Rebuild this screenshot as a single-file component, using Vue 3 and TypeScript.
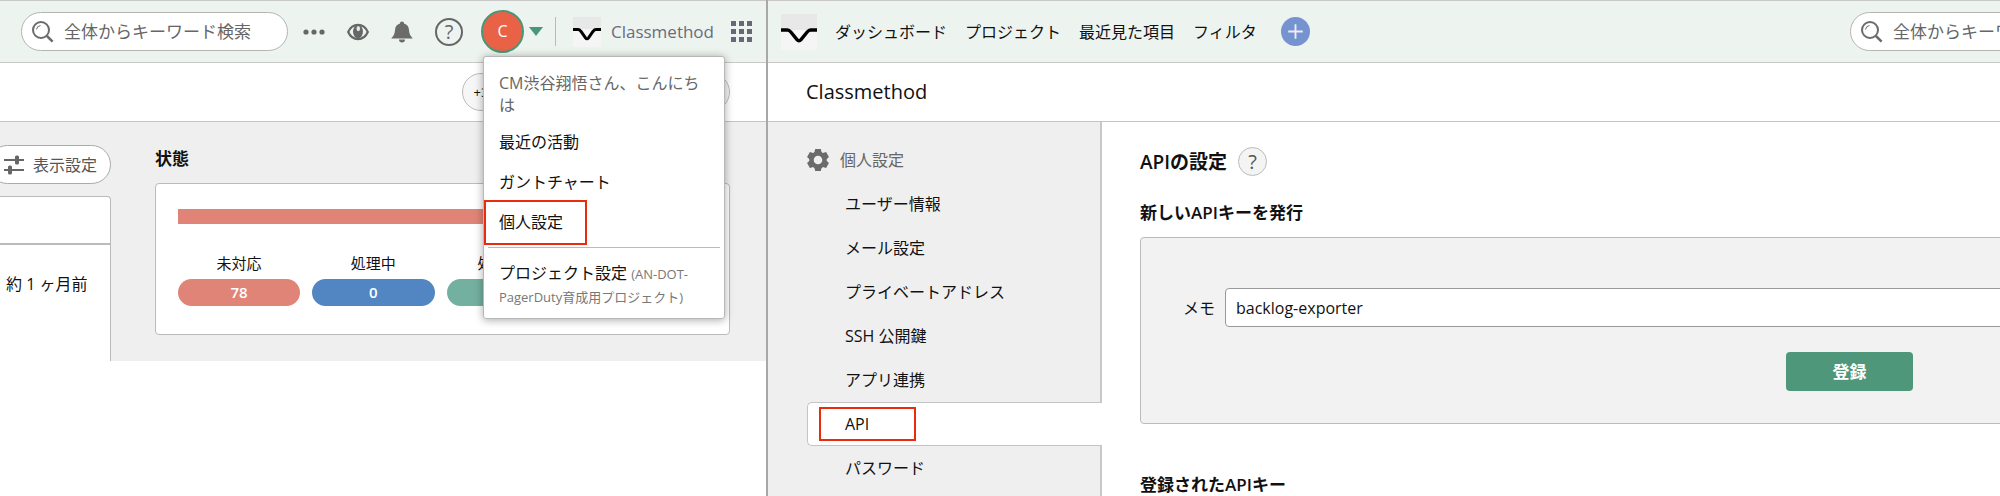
<script setup lang="ts">
import { ref } from 'vue'

interface Status {
  label?: string
  count?: number
  tone: string
}

const statuses: Status[] = [
  { label: '未対応', count: 78, tone: 'open' },
  { label: '処理中', count: 0, tone: 'progress' },
  { label: '処理済み', tone: 'resolved' },
]

const menuItems = [
  { label: '最近の活動', marked: false },
  { label: 'ガントチャート', marked: false },
  { label: '個人設定', marked: true },
]

const globalNav = ['ダッシュボード', 'プロジェクト', '最近見た項目', 'フィルタ']

const settingsNav = [
  'ユーザー情報',
  'メール設定',
  'プライベートアドレス',
  'SSH 公開鍵',
  'アプリ連携',
  'API',
  'パスワード',
]
const current = 'API'

const dots = [0, 1, 2]
const teeth = [0, 60, 120, 180, 240, 300]
const memo = ref('backlog-exporter')
</script>

<template>
  <div class="page">
    <section class="pane pane-left">
      <header class="topbar topbar-left">
        <div class="search">
          <svg class="lens" viewBox="0 0 22 22" aria-hidden="true">
            <circle cx="9" cy="9" r="8" fill="none" stroke="#6b6b6b" stroke-width="2" />
            <path d="M4.5 8.5A4.6 4.6 0 0 1 8.5 4.5" fill="none" stroke="#6b6b6b" stroke-width="1" />
            <path d="M14.8 14.8L20.6 20.6" stroke="#6b6b6b" stroke-width="2.6" />
          </svg>
          <input type="search" aria-label="キーワード検索" placeholder="全体からキーワード検索" />
        </div>
        <div class="tools">
          <button type="button" aria-label="その他">
            <svg width="22" height="22" viewBox="0 0 22 22">
              <circle v-for="d in dots" :key="d" :cx="3 + d * 8" cy="11" r="2.6" fill="#666" />
            </svg>
          </button>
          <button type="button" aria-label="ウォッチ">
            <svg width="22" height="22" viewBox="0 0 22 22">
              <path d="M1.2 11C3.4 6 7 3.9 11 3.9S18.6 6 20.8 11C18.6 16 15 18.1 11 18.1S3.4 16 1.2 11Z" fill="#edf3f0" stroke="#666" stroke-width="2.2" />
              <ellipse cx="11" cy="10.6" rx="5" ry="6.6" fill="#666" />
              <ellipse cx="11.3" cy="7.6" rx="1.8" ry="2.6" fill="#e4e9e7" />
            </svg>
          </button>
          <button type="button" aria-label="お知らせ">
            <svg width="22" height="22" viewBox="0 0 22 22">
              <path d="M11 0.5C12.3 0.5 13 1.3 13 2.5C16.2 3.3 17.8 5.8 18 9C18.2 12.8 19.3 14.8 21.8 17.5H0.2C2.700 14.8 3.8 12.8 4 9C4.2 5.8 5.8 3.3 9 2.5C9 1.3 9.7 0.5 11 0.5Z" fill="#6b6b6b" />
              <path d="M8 18.5H14A3 3 0 0 1 8 18.5Z" fill="#6b6b6b" />
            </svg>
          </button>
          <button type="button" class="help" aria-label="ヘルプ">?</button>
        </div>
        <div class="account">
          <button type="button" class="account-toggle" aria-expanded="true" aria-label="アカウント">
            <span class="avatar">C</span>
            <svg width="14" height="9" viewBox="0 0 14 9"><path d="M0 0H14L7 9Z" fill="#489779" /></svg>
          </button>
          <div class="menu">
            <p class="greeting">CM渋谷翔悟さん、こんにちは</p>
            <ul>
              <li v-for="item in menuItems" :key="item.label">
                <a href="#">{{ item.label }}</a>
                <span v-if="item.marked" class="mark menu-mark"></span>
              </li>
            </ul>
            <a href="#" class="project">プロジェクト設定 <small>(AN-DOT-PagerDuty育成用プロジェクト)</small></a>
          </div>
        </div>
        <a href="#" class="space">
          <svg width="28" height="30" viewBox="0 0 28 30" aria-hidden="true">
            <rect width="28" height="12" fill="#e8e8e8" />
            <rect y="12" width="28" height="18" fill="#f5f5f5" />
            <path d="M0 12.5H5C6.5 12.5 7 13.2 8 14.5L12.5 20.8Q14 22.8 15.5 20.8L20 14.5C21 13.2 21.5 12.5 23 12.5H28" fill="none" stroke="#000" stroke-width="3" />
          </svg>
          <span>Classmethod</span>
        </a>
        <button type="button" class="apps" aria-label="アプリ一覧">
          <i v-for="n in 9" :key="n"></i>
        </button>
      </header>

      <div class="subbar members">
        <span class="chip">+3</span>
        <span class="chip chip-end"></span>
      </div>

      <div class="board">
        <div class="activity">
          <button type="button" class="display">
            <svg width="20" height="20" viewBox="0 0 20 20" aria-hidden="true">
              <path d="M0 5H20M0 15H20" stroke="#666" stroke-width="2" />
              <rect x="11" y="0.5" width="4" height="9" rx="1.5" fill="#666" />
              <rect x="4" y="10.5" width="4" height="9" rx="1.5" fill="#666" />
            </svg>
            表示設定
          </button>
          <div class="feed">
            <div class="feed-head"></div>
            <p>約 1 ヶ月前</p>
          </div>
        </div>
        <div class="state">
          <h2>状態</h2>
          <div class="card">
            <div class="bar"></div>
            <dl>
              <div v-for="s in statuses" :key="s.tone">
                <dt>{{ s.label }}</dt>
                <dd :class="s.tone">{{ s.count }}</dd>
              </div>
            </dl>
          </div>
        </div>
      </div>
    </section>

    <section class="pane pane-right">
      <header class="topbar topbar-right">
        <a href="#" class="logo" aria-label="ホーム">
          <svg width="36" height="36" viewBox="0 0 36 36">
            <rect width="36" height="16" fill="#e8e8e8" />
            <rect y="16" width="36" height="20" fill="#f5f5f5" />
            <path d="M0 16H6.5C8 16 8.800 16.8 9.800 18L16 25.6Q18 28 20 25.6L26.2 18C27.2 16.8 28 16 29.5 16H36" fill="none" stroke="#000" stroke-width="3.400" />
          </svg>
        </a>
        <nav>
          <a v-for="n in globalNav" :key="n" href="#">{{ n }}</a>
        </nav>
        <button type="button" class="add" aria-label="追加">
          <svg width="29" height="29" viewBox="0 0 28 28">
            <circle cx="14" cy="14" r="14" fill="#7693d1" />
            <path d="M14 7V21M7 14H21" stroke="#e9eefa" stroke-width="1.800" />
          </svg>
        </button>
        <div class="search search-right">
          <svg class="lens" viewBox="0 0 22 22" aria-hidden="true">
            <circle cx="9" cy="9" r="8" fill="none" stroke="#6b6b6b" stroke-width="2" />
            <path d="M4.5 8.5A4.6 4.6 0 0 1 8.5 4.5" fill="none" stroke="#6b6b6b" stroke-width="1" />
            <path d="M14.8 14.8L20.6 20.6" stroke="#6b6b6b" stroke-width="2.6" />
          </svg>
          <input type="search" aria-label="キーワード検索" placeholder="全体からキーワード検索" />
        </div>
      </header>

      <div class="subbar org"><h1>Classmethod</h1></div>

      <div class="settings">
        <aside>
          <h2>
            <svg width="22" height="22" viewBox="0 0 22 22" aria-hidden="true">
              <g fill="#6b6b6b">
                <path v-for="t in teeth" :key="t" d="M8.2 0H13.8L15 5H7Z" :transform="`rotate(${t} 11 11)`" />
              </g>
              <circle cx="11" cy="11" r="6.5" fill="none" stroke="#6b6b6b" stroke-width="4.4" />
            </svg>
            個人設定
          </h2>
          <ul>
            <li v-for="s in settingsNav" :key="s" :class="{ active: s === current }">
              <a href="#">{{ s }}</a>
              <span v-if="s === current" class="mark nav-mark"></span>
            </li>
          </ul>
        </aside>
        <main>
          <div class="heading">
            <h2>APIの設定</h2>
            <button type="button" class="hint" aria-label="APIの設定について">?</button>
          </div>
          <h3>新しいAPIキーを発行</h3>
          <form @submit.prevent>
            <div class="field">
              <label for="memo">メモ</label>
              <input id="memo" v-model="memo" type="text" />
            </div>
            <button type="submit">登録</button>
          </form>
          <h3>登録されたAPIキー</h3>
        </main>
      </div>
    </section>
  </div>
</template>

<style>
body {
  margin: 0;
  background: #fff;
}
</style>

<style scoped>
* {
  box-sizing: border-box;
}
h1, h2, h3, p, ul, dl, dd {
  margin: 0;
  padding: 0;
}
ul {
  list-style: none;
}
a {
  color: inherit;
  text-decoration: none;
}
button, input {
  font: inherit;
  color: inherit;
  margin: 0;
}
button {
  border: 0;
  padding: 0;
  background: none;
  flex: none;
}
svg {
  display: block;
  flex: none;
}
.page {
  display: grid;
  grid-template-columns: 768fr 1232fr;
  height: 100vh;
  overflow: hidden;
  font: 16px/22px "Open Sans", "Noto Sans CJK JP", sans-serif;
  color: #111;
}
.pane {
  min-width: 0;
}
.pane-left {
  border-right: 2px solid #a8a8a8;
}
.topbar {
  display: flex;
  align-items: center;
  height: 63px;
  border-top: 1px solid #c8c8c8;
  border-bottom: 1px solid #c8c8c8;
  background: #edf4f0;
}
.topbar-left {
  justify-content: flex-end;
  padding-right: 14px;
}
.search {
  display: flex;
  align-items: center;
  gap: 10px;
  flex: none;
  width: 267px;
  height: 39px;
  padding-left: 10px;
  border: 1px solid #b4b4b4;
  border-radius: 20px;
  background: #fff;
}
.lens {
  width: 22px;
  height: 22px;
}
.search input {
  flex: 1;
  min-width: 0;
  padding: 0;
  border: 0;
  outline: 0;
  background: none;
  font-size: 17px;
}
.search input::placeholder {
  color: #666;
  opacity: 1;
}
.tools {
  display: flex;
  align-items: center;
  gap: 22px;
  margin: 0 18px 0 15px;
}
.help {
  width: 28px;
  height: 28px;
  border: 2px solid #666;
  border-radius: 50%;
  font-size: 20px;
  line-height: 24px;
  color: #666;
}
.account {
  position: relative;
}
.account-toggle {
  display: flex;
  align-items: center;
  gap: 5px;
}
.avatar {
  width: 43px;
  height: 43px;
  border: 2px solid #489779;
  border-radius: 50%;
  background: #ea6245;
  color: #fff;
  line-height: 39px;
}
.menu {
  position: absolute;
  top: 46px;
  left: 2px;
  z-index: 2;
  width: 242px;
  padding: 15px 4px 10px;
  border: 1px solid #b8b8b8;
  border-radius: 3px;
  background: #fff;
  box-shadow: 0 1px 8px rgba(0, 0, 0, 0.35);
}
.greeting {
  padding: 0 11px;
  color: #666;
}
.menu ul {
  padding: 6px 0 5px;
  border-bottom: 1px solid #bbb;
}
.menu li {
  position: relative;
  height: 40px;
  padding: 0 11px;
  line-height: 40px;
}
.mark {
  position: absolute;
  border: 2px solid #e82c0c;
  pointer-events: none;
}
.menu-mark {
  top: -2px;
  left: -4px;
  width: 103px;
  height: 45px;
}
.project {
  display: block;
  padding: 14px 11px 0;
}
.project small {
  font-size: 13px;
  color: #777;
}
.space {
  display: flex;
  align-items: center;
  gap: 10px;
  height: 29px;
  margin: 0 17px 0 12px;
  padding-left: 17px;
  border-left: 1px solid #bbb;
  font-size: 17px;
  color: #6b6b7d;
}
.apps {
  display: grid;
  grid-template-columns: repeat(3, 5px);
  gap: 3px;
}
.apps i {
  height: 5px;
  background: #67677c;
}
.subbar {
  display: flex;
  align-items: center;
  height: 59px;
  border-bottom: 1px solid #c4c4c4;
}
.members {
  justify-content: flex-end;
  padding-right: 36px;
}
.chip {
  width: 38px;
  height: 38px;
  margin-right: 192px;
  border: 1px solid #bbb;
  border-radius: 19px;
  background: #f6f6f6;
  font-size: 13px;
  line-height: 36px;
  text-align: center;
}
.chip-end {
  margin-right: 0;
}
.board {
  display: flex;
  gap: 44px;
  padding-right: 36px;
  background: #efefef;
}
.activity {
  display: flex;
  flex-direction: column;
  width: 111px;
  padding-top: 23px;
}
.display {
  display: flex;
  align-items: center;
  justify-content: flex-end;
  gap: 9px;
  height: 39px;
  margin-left: -12px;
  padding-right: 13px;
  border: 1px solid #aaa;
  border-radius: 20px;
  background: #fff;
  color: #555;
}
.feed {
  flex: 1;
  margin-top: 12px;
  border: 1px solid #bbb;
  border-width: 1px 1px 0 0;
  border-radius: 0 4px 0 0;
  background: #fff;
}
.feed-head {
  height: 48px;
  border-bottom: 2px solid #bbb;
}
.feed p {
  padding: 28px 0 0 6px;
}
.state {
  flex: 1;
  padding: 26px 0 26px;
}
.state h2 {
  margin-bottom: 13px;
  font-size: 17px;
  font-weight: 600;
}
.card {
  height: 152px;
  padding: 25px 26px 27px 22px;
  border: 1px solid #bbb;
  border-radius: 4px;
  background: #fff;
}
.bar {
  height: 15px;
  background: #e08478;
}
dl {
  display: grid;
  grid-template-columns: repeat(4, 1fr);
  gap: 12px;
  padding-top: 28px;
  font-size: 15px;
  text-align: center;
}
dd {
  height: 27px;
  margin-top: 5px;
  border-radius: 14px;
  background: #e08478;
  color: #fff;
  font-weight: 600;
  line-height: 27px;
}
.progress {
  background: #5286c2;
}
.resolved {
  background: #74b0a0;
}
.pane-right {
  display: flex;
  flex-direction: column;
  overflow: hidden;
}
.topbar-right {
  flex: none;
  padding-left: 13px;
}
nav {
  display: flex;
  gap: 18px;
  margin: 0 24px 0 18px;
  white-space: nowrap;
}
.search-right {
  margin: 0 -117px 0 auto;
}
.org {
  flex: none;
  padding-left: 38px;
}
h1 {
  font-size: 20px;
  font-weight: 500;
}
.settings {
  display: flex;
  flex: 1;
  min-height: 0;
}
aside {
  flex: none;
  width: 334px;
  padding: 27px 0 0 39px;
  border-right: 2px solid #c8c8c8;
  background: #efefef;
}
aside h2 {
  display: flex;
  align-items: center;
  gap: 11px;
  margin-bottom: 11px;
  font-size: 16px;
  font-weight: 400;
  color: #666;
}
aside li {
  position: relative;
  height: 44px;
  padding-left: 38px;
  line-height: 44px;
}
aside .active {
  margin-right: -2px;
  padding-left: 37px;
  border: 1px solid #c4c4c4;
  border-right: 0;
  border-radius: 5px 0 0 5px;
  background: #fff;
  line-height: 42px;
}
.nav-mark {
  top: 4px;
  left: 11px;
  width: 97px;
  height: 34px;
}
main {
  flex: 1;
  min-width: 0;
  padding: 25px 0 0 38px;
}
.heading {
  display: flex;
  align-items: center;
  gap: 11px;
  margin-bottom: 26px;
}
.heading h2 {
  font-size: 19px;
  font-weight: 600;
}
.hint {
  width: 29px;
  height: 29px;
  border: 1px solid #bbb;
  border-radius: 50%;
  background: #f4f4f4;
  color: #555;
  font-size: 20px;
  line-height: 27px;
}
h3 {
  font-size: 17px;
  font-weight: 600;
}
form {
  display: flex;
  flex-direction: column;
  align-items: center;
  gap: 25px;
  width: 165%;
  height: 187px;
  margin: 13px 0 50px;
  padding: 50px 42px 0;
  border: 1px solid #bbb;
  border-radius: 4px;
  background: #f2f2f2;
}
.field {
  display: flex;
  align-items: center;
  align-self: stretch;
  gap: 10px;
}
.field input {
  flex: 1;
  height: 39px;
  padding: 0 10px;
  border: 1px solid #999;
  border-radius: 4px;
  background: #fff;
}
form button {
  width: 127px;
  height: 39px;
  border-radius: 4px;
  background: #4e977a;
  color: #fff;
  font-size: 17px;
  font-weight: 700;
}
</style>
